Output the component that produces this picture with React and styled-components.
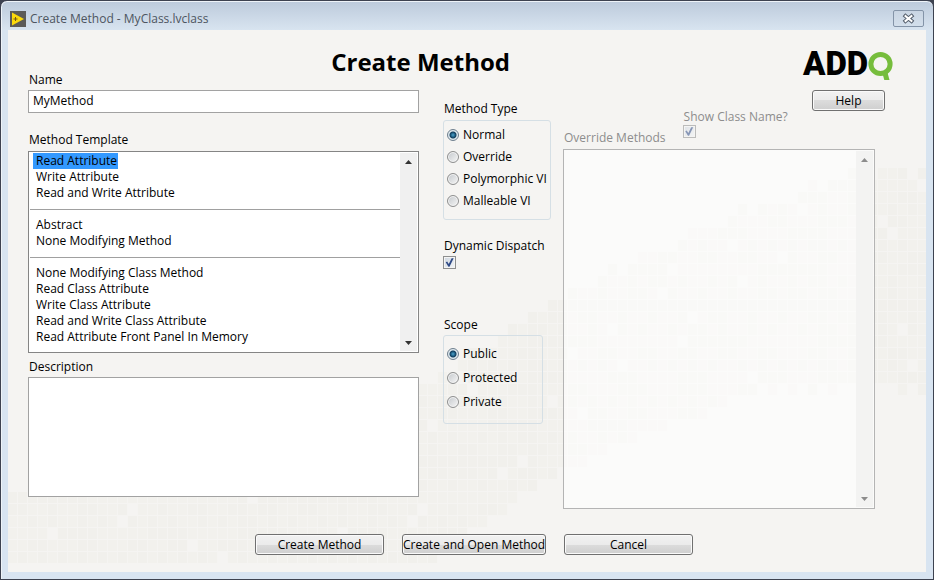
import React, { useState } from "react";
import styled, { createGlobalStyle, css } from "styled-components";

const GlobalStyle = createGlobalStyle`
  *, *::before, *::after { box-sizing: border-box; }
  body { margin: 0; background: #3d4250; }
  body, button, input, textarea {
    font-family: "Open Sans", "Noto Sans", sans-serif;
    font-size: 12px;
    line-height: 16px;
    color: #000;
  }
`;

const Window = styled.div`
  display: flex;
  flex-direction: column;
  min-height: 100vh;
  padding: 2px 7px 7px;
  border: 1px solid #3d4250;
  border-radius: 7px 7px 0 0;
  background: linear-gradient(#bccadb, #d8e4f0 29px, #d8e4f1);
  box-shadow: inset 0 1px 0 #eef3f8, inset 1px 0 0 #eef3f8;
`;

const TitleBar = styled.header`
  display: flex;
  align-items: center;
  gap: 4px;
  height: 27px;
  padding: 4px 2px 0;
  color: #4d5560;
`;

const WindowTitle = styled.span`
  flex: 1;
`;

const CloseButton = styled.button`
  display: grid;
  place-items: center;
  width: 31px;
  height: 17px;
  padding: 0;
  border: 1px solid #8494a8;
  border-radius: 2px;
  background: linear-gradient(#c9d5e3, #d3dfeb);
`;

const Body = styled.main`
  position: relative;
  flex: 1;
  display: flex;
  flex-direction: column;
  background: #f5f4f2;
`;

const MosaicSvg = styled.svg`
  position: absolute;
  inset: 0;
  pointer-events: none;
`;

const Panes = styled.div`
  position: relative;
  flex: 1;
  display: grid;
  grid-template-columns: minmax(0, 391fr) 144px minmax(0, 312fr) 18px;
  grid-template-rows: 42px 1fr;
  padding: 0 33px 0 20px;
`;

const Heading = styled.h1`
  grid-column: 1 / 3;
  margin: 0;
  padding: 20px 53px 0 0;
  text-align: right;
  font-size: 24px;
  line-height: 24px;
  font-weight: 700;
`;

const LeftPane = styled.div`
  grid-column: 1;
  display: flex;
  flex-direction: column;
  padding-bottom: 12px;
`;

const MiddlePane = styled.div`
  grid-column: 2;
  display: flex;
  flex-direction: column;
  align-items: flex-start;
  padding: 29px 12px 0 24px;
`;

const RightPane = styled.div`
  grid-column: 3 / 5;
  grid-row: 1 / 3;
  display: flex;
  flex-direction: column;
`;

const fieldLabel = css`
  display: block;
  padding-left: 1px;
  white-space: nowrap;
`;

const Label = styled.label`
  ${fieldLabel}
  color: ${(p) => (p.$dim ? "#8d8d8d" : "#000")};
`;

const Caption = styled.span`
  ${fieldLabel}
  color: ${(p) => (p.$dim ? "#8d8d8d" : "#000")};
`;

const NameInput = styled.input`
  width: 100%;
  height: 23px;
  margin: 2px 0 19px;
  padding: 0 4px 2px;
  border: 1px solid #a2a2a2;
  background: #fff;
`;

const Description = styled.textarea`
  flex: 1;
  width: 100%;
  min-height: 120px;
  margin-top: 2px;
  padding: 4px;
  border: 1px solid #a2a2a2;
  background: #fff;
  resize: none;
`;

const ListFrame = styled.div`
  display: flex;
  border: 1px solid ${(p) => (p.$dim ? "#b4b4b4" : "#858585")};
  background: ${(p) => (p.$dim ? "rgba(255, 255, 255, 0.6)" : "#fff")};
  padding: 1px;
  ${(p) =>
    p.$dim
      ? css`
          flex: 1;
          margin-right: 18px;
        `
      : css`
          min-height: 202px;
          margin: 3px 0 6px;
        `}
`;

const Options = styled.ul`
  flex: 1;
  min-width: 0;
  margin: 0;
  padding: 0;
  list-style: none;
`;

const Option = styled.li`
  display: flex;
  padding-left: 3px;
`;

const OptionButton = styled.button`
  padding: 0 1px 0 3px;
  border: 0;
  white-space: nowrap;
  background: ${(p) => (p.$selected ? "#3399ff" : "transparent")};
`;

const Separator = styled.li`
  height: 16px;
  padding-top: 8px;
  &::before {
    content: "";
    display: block;
    border-top: 1px solid #a0a0a0;
  }
`;

const ScrollTrack = styled.div`
  display: flex;
  flex-direction: column;
  justify-content: space-between;
  width: 17px;
  background: ${(p) => (p.$dim ? "#f3f3f2" : "#f0f0f0")};
`;

const ScrollButton = styled.button`
  display: grid;
  place-items: center;
  height: 17px;
  padding: 0;
  border: 0;
  background: transparent;
  color: ${(p) => (p.$dim ? "#8c8c8c" : "#333")};
`;

const Group = styled.fieldset`
  display: flex;
  flex-direction: column;
  gap: ${(p) => p.$gap};
  width: ${(p) => p.$width};
  min-width: 0;
  margin: ${(p) => p.$margin};
  padding: ${(p) => p.$pad};
  border: 1px solid #d5dfe5;
  border-radius: 3px;
`;

const RadioLabel = styled.label`
  display: flex;
  align-items: center;
  gap: 4px;
  white-space: nowrap;
`;

const Radio = styled.input`
  appearance: none;
  flex: none;
  width: 12px;
  height: 12px;
  margin: 0;
  border: 1px solid #8e8f8f;
  border-radius: 50%;
  box-shadow: inset 0 0 0 1px #f4f4f4;
  background: linear-gradient(135deg, #c4c8cc, #f6f6f6);
  &:checked {
    border-color: #6e7f8e;
    box-shadow: none;
    background: radial-gradient(circle at 50% 50%, #4fa6cc 0, #1f5f86 2px, #123e5c 3px, #dfe9ef 4px);
  }
`;

const Check = styled.input`
  appearance: none;
  display: block;
  position: relative;
  width: 13px;
  height: 13px;
  margin: 0;
  border: 1px solid #8e8f8f;
  box-shadow: inset 0 0 0 1px #f4f4f4;
  background: linear-gradient(135deg, #cdd5df, #f4f6f8);
  opacity: ${(p) => (p.disabled ? 0.55 : 1)};
  &:checked::after {
    content: "";
    position: absolute;
    inset: 1px;
    background: #2f4a86;
    clip-path: polygon(8% 48%, 24% 40%, 42% 66%, 74% 4%, 96% 4%, 50% 98%, 38% 98%);
  }
`;

const Spaced = styled.div`
  margin: 2px 0 48px;
`;

const RightTop = styled.div`
  display: flex;
  justify-content: space-between;
  height: 119px;
`;

const OverrideHead = styled.div`
  display: flex;
  align-items: flex-end;
  gap: 17px;
  padding-bottom: 3px;
`;

const ShowName = styled.div`
  display: flex;
  flex-direction: column;
  width: 100px;
  padding-bottom: 8px;
`;

const Brand = styled.div`
  display: flex;
  flex-direction: column;
  align-items: flex-end;
  gap: 10px;
  padding-top: 20px;
`;

const LogoSvg = styled.svg`
  overflow: visible;
`;

const PushButton = styled.button`
  width: ${(p) => p.$width};
  height: 21px;
  padding: 0;
  margin: ${(p) => p.$margin || "0"};
  border: 1px solid #707070;
  border-radius: 3px;
  box-shadow: inset 0 0 0 1px #fafafa;
  background: linear-gradient(#f2f2f2, #ebebeb 50%, #dcdcdc 50%, #cfcfcf);
  white-space: nowrap;
  line-height: 18px;
`;

const Actions = styled.footer`
  position: relative;
  display: flex;
  justify-content: center;
  gap: 18px;
  padding: 25px 0 17px 14px;
`;

/* Faint tile band: [x, y] points of its upper and lower edges. */
const UPPER = [[0, 457], [200, 410], [412, 351], [540, 266], [632, 220], [762, 162], [860, 138], [918, 138]];
const LOWER = [[0, 540], [395, 540], [442, 502], [492, 470], [552, 434], [632, 398], [720, 362], [820, 352], [918, 352]];

const edgeAt = (points, x) => {
  for (let i = 1; i < points.length; i++) {
    const [x0, y0] = points[i - 1];
    const [x1, y1] = points[i];
    if (x <= x1) return y0 + ((y1 - y0) * (x - x0)) / (x1 - x0);
  }
  return points[points.length - 1][1];
};

const TILES = [];
for (let row = 0; row < 34; row++) {
  for (let col = 0; col < 92; col++) {
    const x = col * 10;
    const y = 138 + row * 12;
    const noise = (row * 37 + col * 53 + row * col * 11) % 29;
    if (noise === 3) continue;
    const shift = (noise % 3) * 5 - 5;
    if (y >= edgeAt(UPPER, x) + shift && y + 8 <= edgeAt(LOWER, x) + shift + 8 && y < 532) {
      TILES.push([x, y, noise % 2]);
    }
  }
}

function Mosaic() {
  return (
    <MosaicSvg width="918" height="542" aria-hidden="true">
      {TILES.map(([x, y, tone]) => (
        <rect key={`${x}-${y}`} x={x} y={y} width="9" height="11" fill={tone ? "#f1f0ec" : "#f2f1ed"} />
      ))}
    </MosaicSvg>
  );
}

function AppIcon() {
  return (
    <svg width="16" height="16" viewBox="0 0 16 16" aria-hidden="true">
      <rect width="16" height="16" fill="#5c5b58" />
      <path d="M2 1.5 14 8 2 14.5Z" fill="#fbd90b" />
      <path d="M3.5 8h4M5.5 6v4" stroke="#7a5a10" strokeWidth="1" />
    </svg>
  );
}

function CloseIcon() {
  return (
    <svg width="13" height="11" viewBox="0 0 13 11" aria-hidden="true">
      <path d="M3.5 3 9.5 8M9.5 3 3.5 8" stroke="#505a68" strokeWidth="4" strokeLinecap="square" />
      <path d="M3.5 3 9.5 8M9.5 3 3.5 8" stroke="#fff" strokeWidth="2" strokeLinecap="square" />
    </svg>
  );
}

function Logo() {
  return (
    <LogoSvg width="91" height="30" viewBox="0 0 91 30" role="img" aria-label="ADDQ">
      <text x="1" y="25" fontFamily="Roboto, sans-serif" fontWeight="900" fontSize="33" fill="#000">
        ADD
      </text>
      <circle cx="78.5" cy="14" r="9.6" fill="none" stroke="#76bd3c" strokeWidth="5" />
      <path d="M80 21.5h5.2L87.5 30h-5.2Z" fill="#76bd3c" />
    </LogoSvg>
  );
}

function Scrollbar({ dim }) {
  return (
    <ScrollTrack $dim={dim}>
      <ScrollButton $dim={dim} disabled={dim} aria-label="Scroll up">
        <svg width="7" height="4" viewBox="0 0 7 4"><path d="M0 4 3.5 0 7 4Z" fill="currentColor" /></svg>
      </ScrollButton>
      <ScrollButton $dim={dim} disabled={dim} aria-label="Scroll down">
        <svg width="7" height="4" viewBox="0 0 7 4"><path d="M0 0h7L3.5 4Z" fill="currentColor" /></svg>
      </ScrollButton>
    </ScrollTrack>
  );
}

const TEMPLATES = [
  "Read Attribute",
  "Write Attribute",
  "Read and Write Attribute",
  null,
  "Abstract",
  "None Modifying Method",
  null,
  "None Modifying Class Method",
  "Read Class Attribute",
  "Write Class Attribute",
  "Read and Write Class Attribute",
  "Read Attribute Front Panel In Memory",
];

function RadioGroup({ name, items, labelId, ...box }) {
  const [value, setValue] = useState(items[0]);
  return (
    <Group aria-labelledby={labelId} {...box}>
      {items.map((item) => (
        <RadioLabel key={item}>
          <Radio type="radio" name={name} checked={value === item} onChange={() => setValue(item)} />
          {item}
        </RadioLabel>
      ))}
    </Group>
  );
}

export default function App() {
  const [template, setTemplate] = useState(TEMPLATES[0]);
  return (
    <>
      <GlobalStyle />
      <Window>
        <TitleBar>
          <AppIcon />
          <WindowTitle>Create Method - MyClass.lvclass</WindowTitle>
          <CloseButton aria-label="Close"><CloseIcon /></CloseButton>
        </TitleBar>
        <Body>
          <Mosaic />
          <Panes>
            <Heading>Create Method</Heading>
            <LeftPane>
              <Label htmlFor="name">Name</Label>
              <NameInput id="name" defaultValue="MyMethod" />
              <Caption id="template-label">Method Template</Caption>
              <ListFrame>
                <Options aria-labelledby="template-label">
                  {TEMPLATES.map((item, i) =>
                    item ? (
                      <Option key={item}>
                        <OptionButton
                          $selected={item === template}
                          aria-pressed={item === template}
                          onClick={() => setTemplate(item)}
                        >
                          {item}
                        </OptionButton>
                      </Option>
                    ) : (
                      <Separator key={i} role="separator" />
                    )
                  )}
                </Options>
                <Scrollbar />
              </ListFrame>
              <Label htmlFor="description">Description</Label>
              <Description id="description" />
            </LeftPane>
            <MiddlePane>
              <Caption id="type-label">Method Type</Caption>
              <RadioGroup
                name="type"
                labelId="type-label"
                items={["Normal", "Override", "Polymorphic VI", "Malleable VI"]}
                $width="108px"
                $gap="6px"
                $margin="3px 0 18px"
                $pad="6px 3px 10px"
              />
              <Label htmlFor="dispatch">Dynamic Dispatch</Label>
              <Spaced>
                <Check id="dispatch" type="checkbox" defaultChecked />
              </Spaced>
              <Caption id="scope-label">Scope</Caption>
              <RadioGroup
                name="scope"
                labelId="scope-label"
                items={["Public", "Protected", "Private"]}
                $width="100px"
                $gap="8px"
                $margin="2px 0 0"
                $pad="10px 3px 13px"
              />
            </MiddlePane>
            <RightPane>
              <RightTop>
                <OverrideHead>
                  <Caption $dim id="override-label">Override Methods</Caption>
                  <ShowName>
                    <Label $dim htmlFor="show-class">Show Class Name?</Label>
                    <Check id="show-class" type="checkbox" defaultChecked disabled />
                  </ShowName>
                </OverrideHead>
                <Brand>
                  <Logo />
                  <PushButton $width="73px" $margin="0 8px 0 0">Help</PushButton>
                </Brand>
              </RightTop>
              <ListFrame $dim>
                <Options aria-labelledby="override-label" />
                <Scrollbar dim />
              </ListFrame>
            </RightPane>
          </Panes>
          <Actions>
            <PushButton $width="129px">Create Method</PushButton>
            <PushButton $width="144px">Create and Open Method</PushButton>
            <PushButton $width="129px">Cancel</PushButton>
          </Actions>
        </Body>
      </Window>
    </>
  );
}
